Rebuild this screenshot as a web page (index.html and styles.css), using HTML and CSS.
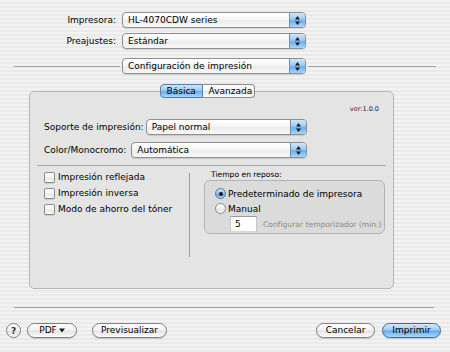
FILE: index.html
```html
<!DOCTYPE html>
<html lang="es">
<head>
<meta charset="utf-8">
<title>Imprimir</title>
<link rel="stylesheet" href="styles.css">
</head>
<body>
<div class="win">
  <div class="form-top">
    <span class="lbl">Impresora:</span>
    <div class="popup"><span class="pv">HL-4070CDW series</span><span class="arr"><svg width="7" height="11" viewBox="0 0 7 11"><path d="M3.5 1 L6 4.5 H1 Z M3.5 10 L6 6.5 H1 Z" fill="#1a1a1a"/></svg></span></div>
    <span class="lbl">Preajustes:</span>
    <div class="popup"><span class="pv">Estándar</span><span class="arr"><svg width="7" height="11" viewBox="0 0 7 11"><path d="M3.5 1 L6 4.5 H1 Z M3.5 10 L6 6.5 H1 Z" fill="#1a1a1a"/></svg></span></div>
  </div>

  <div class="panel-row">
    <span class="hline hl-left"></span>
    <div class="popup panel-pop"><span class="pv">Configuración de impresión</span><span class="arr"><svg width="7" height="11" viewBox="0 0 7 11"><path d="M3.5 1 L6 4.5 H1 Z M3.5 10 L6 6.5 H1 Z" fill="#1a1a1a"/></svg></span></div>
    <span class="hline hl-right"></span>
  </div>

  <div class="tabbox">
    <div class="tabs"><span class="tab tab-sel">Básica</span><span class="tab">Avanzada</span></div>
    <div class="ver">ver:1.0.0</div>
    <div class="frow frow-1">
      <span class="flbl">Soporte de impresión:</span>
      <div class="popup grow"><span class="pv">Papel normal</span><span class="arr"><svg width="7" height="11" viewBox="0 0 7 11"><path d="M3.5 1 L6 4.5 H1 Z M3.5 10 L6 6.5 H1 Z" fill="#1a1a1a"/></svg></span></div>
    </div>
    <div class="frow frow-2">
      <span class="flbl">Color/Monocromo:</span>
      <div class="popup grow"><span class="pv">Automática</span><span class="arr"><svg width="7" height="11" viewBox="0 0 7 11"><path d="M3.5 1 L6 4.5 H1 Z M3.5 10 L6 6.5 H1 Z" fill="#1a1a1a"/></svg></span></div>
    </div>
    <div class="sep"></div>
    <div class="lower">
      <div class="checks">
        <div class="chk"><span class="box"></span>Impresión reflejada</div>
        <div class="chk"><span class="box"></span>Impresión inversa</div>
        <div class="chk"><span class="box"></span>Modo de ahorro del tóner</div>
      </div>
      <div class="vline"></div>
      <div class="right">
        <div class="gtitle">Tiempo en reposo:</div>
        <div class="group">
          <div class="radio"><span class="rb rb-on"><span class="dot"></span></span>Predeterminado de impresora</div>
          <div class="radio"><span class="rb"></span>Manual</div>
          <div class="timer"><span class="field">5</span><span class="hint">Configurar temporizador (min.)</span></div>
        </div>
      </div>
    </div>
  </div>

  <div class="bsep"></div>

  <div class="buttons">
    <span class="help">?</span>
    <span class="btn btn-pdf">PDF <svg width="6" height="5" viewBox="0 0 6 5"><path d="M0 0.5 H6 L3 4.5 Z" fill="#1a1a1a"/></svg></span>
    <span class="btn btn-prev">Previsualizar</span>
    <span class="spacer"></span>
    <span class="btn btn-cancel">Cancelar</span>
    <span class="btn btn-print">Imprimir</span>
  </div>
</div>
</body>
</html>
```

FILE: styles.css
```css
* { box-sizing: border-box; }
html, body { margin: 0; padding: 0; }
body {
  font-family: "DejaVu Sans", "Liberation Sans", sans-serif;
  font-size: 9px;
  color: #000;
  background: #eeeeee;
}
.win {
  width: 450px;
  height: 352px;
  overflow: hidden;
  display: flex;
  flex-direction: column;
  background: repeating-linear-gradient(to bottom, #f2f2f2 0, #f2f2f2 2px, #eaeaea 2px, #eaeaea 4px);
}

/* top form */
.form-top {
  margin-top: 12px;
  display: grid;
  grid-template-columns: 116px 184px;
  column-gap: 6px;
  row-gap: 5px;
}
.lbl {
  text-align: right;
  line-height: 16px;
  height: 16px;
}

/* popup button */
.popup {
  height: 16px;
  display: flex;
  align-items: stretch;
  border: 1px solid #8d8d8d;
  border-radius: 4px;
  background: linear-gradient(to bottom, #ffffff 0%, #f6f6f6 45%, #ececec 55%, #f8f8f8 100%);
  box-shadow: 0 1px 1px rgba(0,0,0,0.12);
  overflow: hidden;
}
.pv {
  flex: 1;
  padding-left: 5px;
  line-height: 14px;
  white-space: nowrap;
}
.arr {
  width: 16px;
  flex: none;
  display: flex;
  align-items: center;
  justify-content: center;
  border-left: 1px solid #6e8fb4;
  background: linear-gradient(to bottom, #cfe6fb 0%, #9ccbf4 45%, #6aaeea 55%, #a9d6fb 100%);
}

/* panel selector row */
.panel-row {
  margin-top: 9px;
  display: flex;
  align-items: center;
  gap: 2px;
  padding: 0 14px;
}
.hline {
  height: 1px;
  background: #a3a3a3;
}
.hl-left { width: 106px; flex: none; }
.hl-right { flex: 1; }
.panel-pop { width: 184px; flex: none; }

/* tab box */
.tabbox {
  margin: 17px 0 0 29px;
  width: 365px;
  height: 198px;
  flex: none;
  border: 1px solid #b6b6b6;
  border-radius: 5px;
  background: #e4e4e4;
}
.tabs {
  margin-top: -8px;
  display: flex;
  justify-content: center;
  padding-right: 9px;
}
.tab {
  height: 14px;
  line-height: 12px;
  border: 1px solid #8a8a8a;
  padding: 0 6px;
  background: linear-gradient(to bottom, #ffffff 0%, #f5f5f5 45%, #e9e9e9 55%, #fafafa 100%);
}
.tab-sel {
  width: 43px;
  text-align: center;
  border-radius: 4px 0 0 4px;
  border-color: #5a7da6;
  background: linear-gradient(to bottom, #cfe6fb 0%, #9ccbf4 45%, #6aaeea 55%, #a9d6fb 100%);
}
.tab:last-child {
  width: 52px;
  text-align: center;
  border-left: none;
  border-radius: 0 4px 4px 0;
}
.ver {
  margin-top: 6px;
  text-align: right;
  padding-right: 14px;
  font-size: 6.5px;
  line-height: 10px;
  color: #222;
}
.frow {
  display: flex;
  align-items: center;
  gap: 2px;
  padding: 0 86px 0 14px;
}
.frow-1 { margin-top: 5px; }
.frow-2 { margin-top: 7px; }
.frow-2 .flbl { margin-right: 3px; }
.flbl { white-space: nowrap; line-height: 16px; }
.grow { flex: 1; }
.sep {
  margin: 7px 7px 0 7px;
  height: 1px;
  background: #a6a6a6;
}

/* lower section */
.lower {
  display: flex;
  align-items: flex-start;
}
.checks {
  width: 159px;
  flex: none;
  padding-left: 14px;
  margin-top: 3px;
}
.chk {
  display: flex;
  align-items: center;
  height: 16px;
  gap: 3px;
}
.box {
  width: 11px;
  height: 11px;
  flex: none;
  border: 1px solid #8a8a8a;
  border-radius: 2px;
  background: linear-gradient(to bottom, #ffffff 0%, #f2f2f2 50%, #e2e2e2 51%, #fbfbfb 100%);
  box-shadow: 0 1px 0 rgba(0,0,0,0.1);
}
.vline {
  width: 1px;
  height: 84px;
  margin-top: 7px;
  flex: none;
  background: #9d9d9d;
}
.right {
  padding-left: 14px;
}
.gtitle {
  margin-top: 4px;
  font-size: 7.6px;
  line-height: 10px;
  padding-left: 7px;
}
.group {
  width: 181px;
  height: 54px;
  border: 1px solid #b3b3b3;
  border-radius: 6px;
  background: rgba(0,0,0,0.035);
  padding: 5px 0 0 10px;
}
.radio {
  height: 15px;
  display: flex;
  align-items: center;
  gap: 2px;
}
.rb {
  width: 11px;
  height: 11px;
  flex: none;
  border: 1px solid #8a8a8a;
  border-radius: 50%;
  background: linear-gradient(to bottom, #ffffff 0%, #f0f0f0 50%, #e0e0e0 51%, #fafafa 100%);
  display: flex;
  align-items: center;
  justify-content: center;
}
.rb-on {
  border-color: #4f73a0;
  background: linear-gradient(to bottom, #cfe6fb 0%, #8fc2f1 50%, #5fa5e6 51%, #a9d6fb 100%);
}
.dot {
  width: 4px;
  height: 4px;
  border-radius: 50%;
  background: #111;
}
.timer {
  display: flex;
  align-items: center;
  margin-left: 15px;
  height: 16px;
}
.field {
  width: 27px;
  height: 16px;
  background: #fff;
  border-top: 1px solid #9a9a9a;
  border-left: 1px solid #c4c4c4;
  border-right: 1px solid #c4c4c4;
  border-bottom: 1px solid #d6d6d6;
  padding-left: 4px;
  line-height: 14px;
}
.hint {
  margin-left: 6px;
  font-size: 7.6px;
  color: #8a8a8a;
}

/* bottom */
.bsep {
  margin: 18px 16px 0 14px;
  height: 1px;
  background: #a3a3a3;
}
.buttons {
  margin-top: 15px;
  display: flex;
  align-items: center;
  padding: 0 9px 0 6px;
  height: 15px;
}
.help {
  width: 15px;
  height: 15px;
  border-radius: 50%;
  border: 1px solid #7f7f7f;
  background: linear-gradient(to bottom, #ffffff 0%, #f0f0f0 50%, #dedede 51%, #fafafa 100%);
  display: flex;
  align-items: center;
  justify-content: center;
  font-size: 9px;
  font-weight: bold;
  color: #333;
}
.btn {
  height: 15px;
  border: 1px solid #7f7f7f;
  border-radius: 8px;
  background: linear-gradient(to bottom, #ffffff 0%, #f3f3f3 45%, #e4e4e4 55%, #fbfbfb 100%);
  box-shadow: 0 1px 1px rgba(0,0,0,0.15);
  display: flex;
  align-items: center;
  justify-content: center;
  line-height: 13px;
  gap: 2px;
}
.btn-pdf { width: 50px; margin-left: 6px; }
.btn-prev { width: 75px; margin-left: 15px; }
.spacer { flex: 1; }
.btn-cancel { width: 59px; }
.btn-print {
  width: 59px;
  margin-left: 7px;
  border-color: #3f6aa0;
  background: linear-gradient(to bottom, #d4eafd 0%, #9fcdf5 45%, #66abea 55%, #aedafc 100%);
}
```
